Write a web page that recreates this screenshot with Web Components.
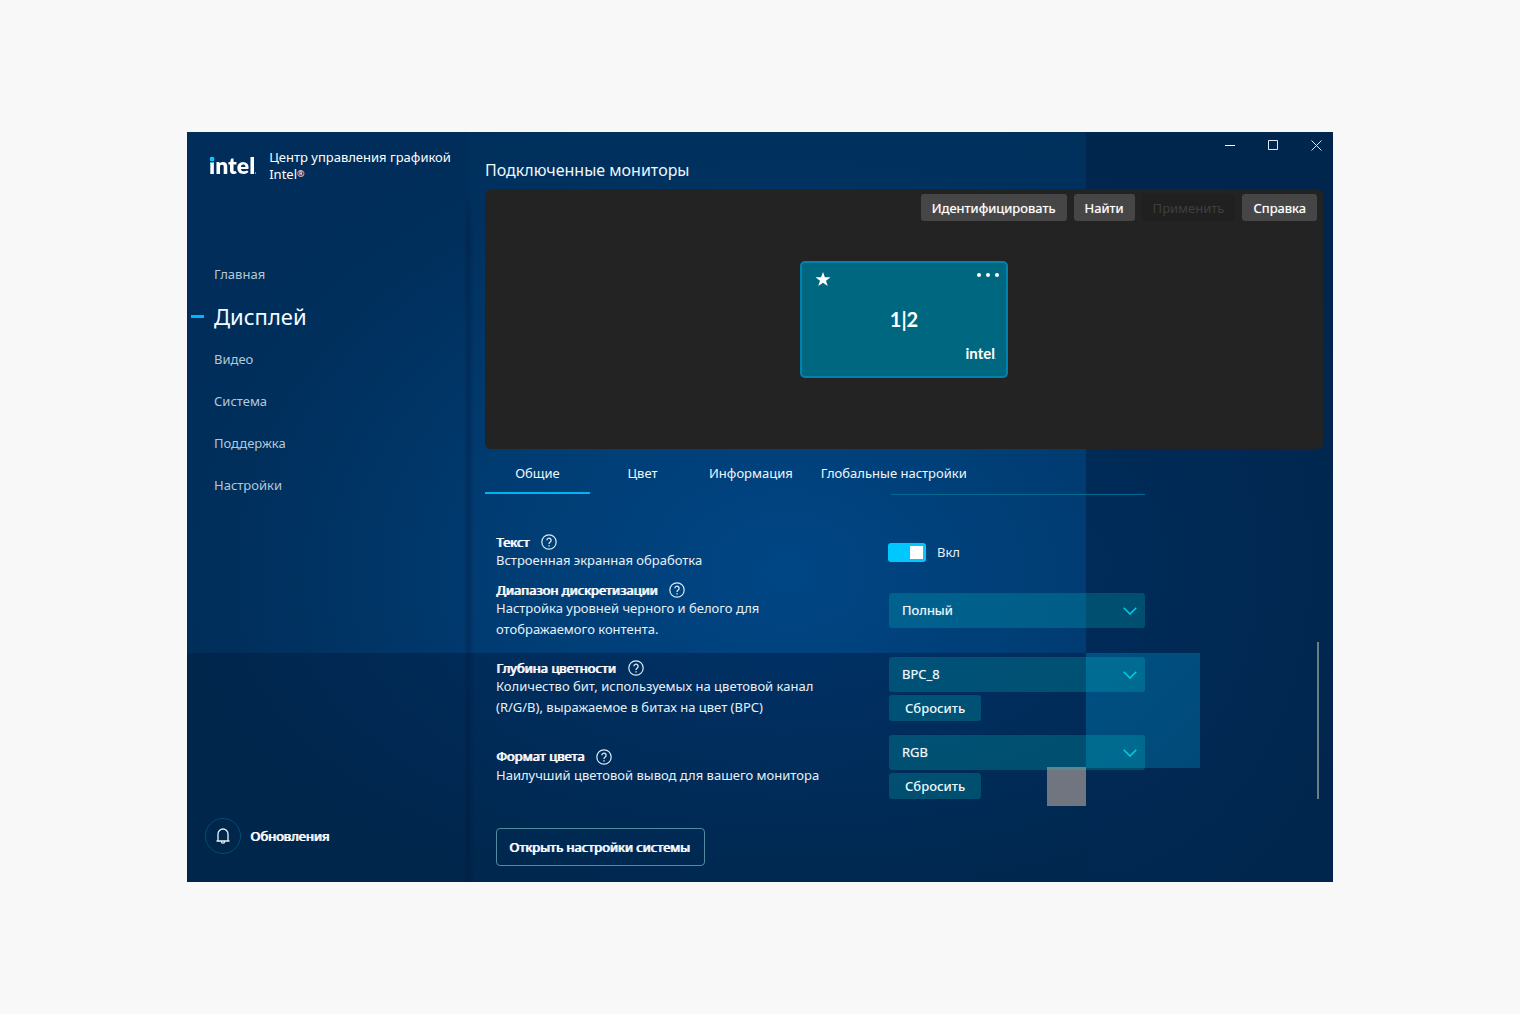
<!DOCTYPE html>
<html lang="ru">
<head>
<meta charset="utf-8">
<title>Центр управления графикой Intel®</title>
<style>
  html { background: #f8f8f8; }
  body { margin: 0; padding: 132px 187px; font: 13px/21px "Noto Sans", "Open Sans", sans-serif; color: #e6f1f8; }
</style>
</head>
<body>
<graphics-center></graphics-center>

<script>
const define = (name, html, setup) => {
  const template = document.createElement('template');
  template.innerHTML = '<style>*{box-sizing:border-box} button,select{font:inherit;color:inherit;cursor:pointer}</style>' + html;
  customElements.define(name, class extends HTMLElement {
    constructor() {
      super();
      this.attachShadow({ mode: 'open' }).append(template.content.cloneNode(true));
    }
    connectedCallback() { if (setup) setup(this, this.shadowRoot); }
  });
};

define('brand-logo', `
<style>
  :host { display: flex; align-items: baseline; font: 800 23px/24px Lato, sans-serif; color: #fff; }
  .word { background: linear-gradient(#00c7fd, #00c7fd) 0 0 / 6px 10px no-repeat, linear-gradient(#fff, #fff); -webkit-background-clip: text; background-clip: text; color: transparent; }
  i { width: 1px; height: 2px; background: #3fa9d8; }
  :host([small]) { font-size: 15px; line-height: 16px; font-weight: 700; }
  :host([small]) .word { background: none; color: #fff; }
  :host([small]) i { height: 1px; }
</style>
<span class="word">intel</span><i></i>`);

define('nav-item', `
<style>
  :host { display: block; }
  a { display: flex; align-items: center; gap: 10px; height: 42px; padding-left: 4px; color: #b4c8d6; text-decoration: none; }
  i { width: 13px; height: 3px; }
  :host([active]) a { height: 43px; padding-bottom: 1px; color: #f4fbff; font-size: 22px; }
  :host([active]) i { background: #00b4ff; }
</style>
<a href="#"><i></i><slot></slot></a>`, (host, root) => {
  if (host.hasAttribute('active')) root.querySelector('a').setAttribute('aria-current', 'page');
});

define('side-bar', `
<style>
  :host { display: flex; flex-direction: column; padding: 17px 0 28px; position: relative; background: rgba(0, 25, 50, .05); }
  :host::after { content: ""; position: absolute; top: 60px; bottom: 0; right: -6px; width: 10px; background: linear-gradient(90deg, transparent, rgba(0,20,50,.3) 45%, transparent); -webkit-mask: linear-gradient(transparent, #000 40px); mask: linear-gradient(transparent, #000 40px); }
  header { display: flex; align-items: center; gap: 13px; padding-left: 22px; line-height: 17px; color: #fff; }
  header p { margin: 0; width: 190px; }
  brand-logo { min-width: 46px; margin-bottom: 2px; }
  nav { margin-top: 70px; }
  .updates { display: flex; align-items: center; gap: 9px; margin: auto 0 0 18px; padding: 0; border: 0; background: none; text-shadow: 1px 0 currentColor; color: #fff; align-self: flex-start; }
  .ring { display: grid; place-items: center; width: 36px; height: 36px; border: 1px solid #00506a; border-radius: 50%; }
  .maker { display: flex; align-items: center; }
  small { font-size: 9px; line-height: 13px; padding-bottom: 2px; }
</style>
<header><brand-logo></brand-logo><p>Центр управления графикой <span class="maker">Intel<small>®</small></span></p></header>
<nav aria-label="Разделы">
  <nav-item>Главная</nav-item>
  <nav-item active>Дисплей</nav-item>
  <nav-item>Видео</nav-item>
  <nav-item>Система</nav-item>
  <nav-item>Поддержка</nav-item>
  <nav-item>Настройки</nav-item>
</nav>
<button class="updates" type="button">
  <span class="ring"><svg width="16" height="18" viewBox="0 0 16 18" fill="none" stroke="#e8f4fa" stroke-width="1.3"><path d="M1.5 14h13M3 14V7a5 5 0 0 1 10 0v7M6.3 14.3a1.7 1.9 0 0 0 3.4 0"/></svg></span>
  <span>Обновления</span>
</button>`);

define('window-controls', `
<style>
  :host { display: flex; justify-content: flex-end; gap: 10px; }
  button { display: grid; place-items: center; width: 33px; height: 26px; padding: 0; border: 0; background: none; }
</style>
<button type="button" aria-label="Свернуть"><svg width="11" height="11" stroke="#fff"><path d="M0 5.5h10"/></svg></button>
<button type="button" aria-label="Развернуть"><svg width="11" height="11" viewBox="0 0 11 11" stroke="#dbe9f4" fill="none"><path d="M.5 .5h9v9h-9z"/></svg></button>
<button type="button" aria-label="Закрыть"><svg width="11" height="11" stroke="#dbe9f4"><path d="M.5 .5l10 10M10.500 .5l-10 10"/></svg></button>`);

define('stage-button', `
<style>
  :host { display: block; }
  button { display: block; height: 27px; padding: 1px 11px 0; border: 0; border-radius: 3px; background: #464646; color: #fff; text-shadow: 0 0 1px rgba(255, 255, 255, .6); }
  button:disabled { background: #202020; color: #3f3f3f; text-shadow: none; }
</style>
<button type="button"><slot></slot></button>`, (host, root) => {
  root.querySelector('button').disabled = host.hasAttribute('disabled');
});

define('monitor-tile', `
<style>
  :host { display: grid; grid-template-rows: 1fr auto 1fr; width: 208px; height: 117px; padding: 7px 5px 7px 13px; border: 2px solid #0083ae; border-radius: 5px; background: #006780; color: #fff; }
  .top { display: flex; justify-content: space-between; align-items: flex-start; }
  .more { padding: 2px 1px; border: 0; background: none; display: flex; }
  .id { text-align: center; font: 700 20px/24px Lato, sans-serif; padding: 0 8px 2px 0; }
  brand-logo { justify-self: end; align-self: end; margin: 0 5px 8px 0; }
</style>
<div class="top">
  <svg width="16" height="18" viewBox="0 0 16 18" fill="#fff"><path d="M8 2l1.900 5.300h5.600l-4.500 3.400 1.700 5.400L8 12.800l-4.700 3.300L5 10.700.5 7.300h5.600z"/></svg>
  <button class="more" type="button" aria-label="Действия"><svg width="24" height="6" fill="#fff"><circle cx="3" cy="3" r="2"/><circle cx="12" cy="3" r="2"/><circle cx="21" cy="3" r="2"/></svg></button>
</div>
<div class="id"><slot></slot></div>
<brand-logo small></brand-logo>`);

define('monitor-stage', `
<style>
  :host { display: flex; flex-direction: column; min-height: 260px; padding: 5px 6px; border-radius: 6px; background: #232323; }
  .actions { display: flex; justify-content: flex-end; gap: 7px; margin-bottom: 40px; }
  monitor-tile { align-self: center; }
</style>
<div class="actions">
  <stage-button>Идентифицировать</stage-button>
  <stage-button>Найти</stage-button>
  <stage-button disabled>Применить</stage-button>
  <stage-button>Справка</stage-button>
</div>
<monitor-tile>1|2</monitor-tile>`);

define('tab-bar', `
<style>
  :host { display: flex; }
  button { min-width: 105px; height: 45px; padding: 5px 14px 0; border: 0; border-bottom: 2px solid transparent; background: none; color: #eef7fc; }
  [aria-selected="true"] { border-color: #00b4f0; }
</style>
<button type="button" role="tab" aria-selected="true">Общие</button>
<button type="button" role="tab" aria-selected="false">Цвет</button>
<button type="button" role="tab" aria-selected="false">Информация</button>
<button type="button" role="tab" aria-selected="false">Глобальные настройки</button>`, (host) => host.setAttribute('role', 'tablist'));

define('setting-row', `
<style>
  :host { display: grid; grid-template-columns: 393px minmax(0, 256px); align-items: center; min-height: 78px; }
  :host([compact]) { min-height: 39px; }
  .head { display: flex; align-items: center; gap: 12px; height: 16px; color: #fff; }
  h3 { margin: 0; font: inherit; text-shadow: 1px 0 currentColor; }
  .help { display: flex; padding: 0; border: 0; background: none; }
  p { margin: 0; width: 330px; }
</style>
<div>
  <div class="head"><h3></h3><button class="help" type="button" aria-label="Справка"><svg width="16" height="16" viewBox="0 0 16 16" fill="none" stroke="#d9edf7" stroke-width="1.200"><circle cx="8" cy="8" r="7.200"/><path d="M5.900 6.300a2.100 2.100 0 1 1 3.300 1.700C8.400 8.600 8 8.900 8 9.900" stroke-width="1.300"/><path d="M8 11.200v1.300" stroke-width="1.400"/></svg></button></div>
  <p><slot name="about"></slot></p>
</div>
<slot></slot>`, (host, root) => { root.querySelector('h3').textContent = host.getAttribute('heading'); });

define('toggle-switch', `
<style>
  :host { display: block; }
  label { display: flex; align-items: center; gap: 11px; cursor: pointer; }
  input { appearance: none; -webkit-appearance: none; width: 38px; height: 19px; margin: 0 0 0 -1px; border-radius: 3px; background: linear-gradient(#fff, #fff) right 3px center / 13px 13px no-repeat #00c7fd; }
  input:not(:checked) { background-position: left 3px center; background-color: #31627e; }
</style>
<label><input type="checkbox" role="switch" checked><span>Вкл</span></label>`);

define('select-field', `
<style>
  :host { display: grid; padding-bottom: 1px; }
  select, svg { grid-area: 1 / 1; }
  select { appearance: none; -webkit-appearance: none; width: 100%; height: 35px; padding: 0 36px 0 13px; border: 0; border-radius: 3px; background: rgba(0, 225, 215, .2); color: #eef9fc; text-shadow: 0 0 1px rgba(255, 255, 255, .5); }
  option { background: #00405e; }
  svg { justify-self: end; align-self: center; margin-right: 8px; pointer-events: none; }
</style>
<select><option></option></select>
<svg width="14" height="8" fill="none" stroke="#00cfe8" stroke-width="1.500"><path d="M.7 .8L7 7l6.300-6.200"/></svg>`, (host, root) => {
  root.querySelector('option').textContent = host.getAttribute('value');
  root.querySelector('select').setAttribute('aria-label', host.getAttribute('label'));
});

define('reset-button', `
<style>
  :host { display: block; margin-top: 2px; }
  button { display: block; height: 26px; padding: 0 16px; border: 0; border-radius: 3px; background: rgba(0, 225, 215, .2); color: #eef9fc; font-weight: 500; }
</style>
<button type="button">Сбросить</button>`);

define('display-settings', `
<style>
  :host { display: grid; grid-template-columns: 1fr auto; }
  .rows { padding-left: 11px; }
  hr { width: 254px; height: 1px; margin: 0 0 38px 395px; border: 0; background: #006a90; }
  .open { height: 38px; margin: 22px 0 16px; padding: 0 14px 0 12px; border: 1px solid #4f8da5; border-radius: 4px; background: none; color: #fff; text-shadow: 1px 0 currentColor; }
  .thumb { align-self: end; width: 2px; height: 157px; margin: 0 4px 83px 0; background: #6d7d84; }
</style>
<div class="rows">
  <hr>
  <setting-row compact heading="Текст"><span slot="about">Встроенная экранная обработка</span><toggle-switch></toggle-switch></setting-row>
  <setting-row heading="Диапазон дискретизации"><span slot="about">Настройка уровней черного и белого для отображаемого контента.</span><select-field label="Диапазон дискретизации" value="Полный"></select-field></setting-row>
  <setting-row heading="Глубина цветности"><span slot="about">Количество бит, используемых на цветовой канал (R/G/B), выражаемое в битах на цвет (BPC)</span><div><select-field label="Глубина цветности" value="BPC_8"></select-field><reset-button></reset-button></div></setting-row>
  <setting-row heading="Формат цвета"><span slot="about">Наилучший цветовой вывод для вашего монитора</span><div><select-field label="Формат цвета" value="RGB"></select-field><reset-button></reset-button></div></setting-row>
  <button class="open" type="button">Открыть настройки системы</button>
</div>
<div class="thumb"></div>`);

define('graphics-center', `
<style>
  :host {
    display: grid; grid-template-columns: 281px minmax(0, 1fr);
    background:
      linear-gradient(#70757f, #70757f) 860px 635px / 39px 39px no-repeat,
      linear-gradient(135deg, #005084, #004a78) 899px 521px / 114px 115px no-repeat,
      radial-gradient(300px 420px at 0 430px, #002c5a, #00264d) 899px 0 / 100% 100% no-repeat,
      radial-gradient(640px 330px at 600px -50px, #003168, #002d5c 45%, #00274c) 0 521px / 899px 100% no-repeat,
      radial-gradient(700px 520px at 600px 440px, #004685, #003c72 45%, #00315e 80%, #002f5b);
  }
  h1 { margin: 0 0 7px; font-size: 16px; line-height: 24px; font-weight: 400; color: #eef7fc; }
  .body { padding: 0 10px 0 17px; }
</style>
<side-bar></side-bar>
<main>
  <window-controls></window-controls>
  <div class="body">
    <h1>Подключенные мониторы</h1>
    <monitor-stage></monitor-stage>
    <tab-bar></tab-bar>
    <display-settings></display-settings>
  </div>
</main>`);
</script>
</body>
</html>
